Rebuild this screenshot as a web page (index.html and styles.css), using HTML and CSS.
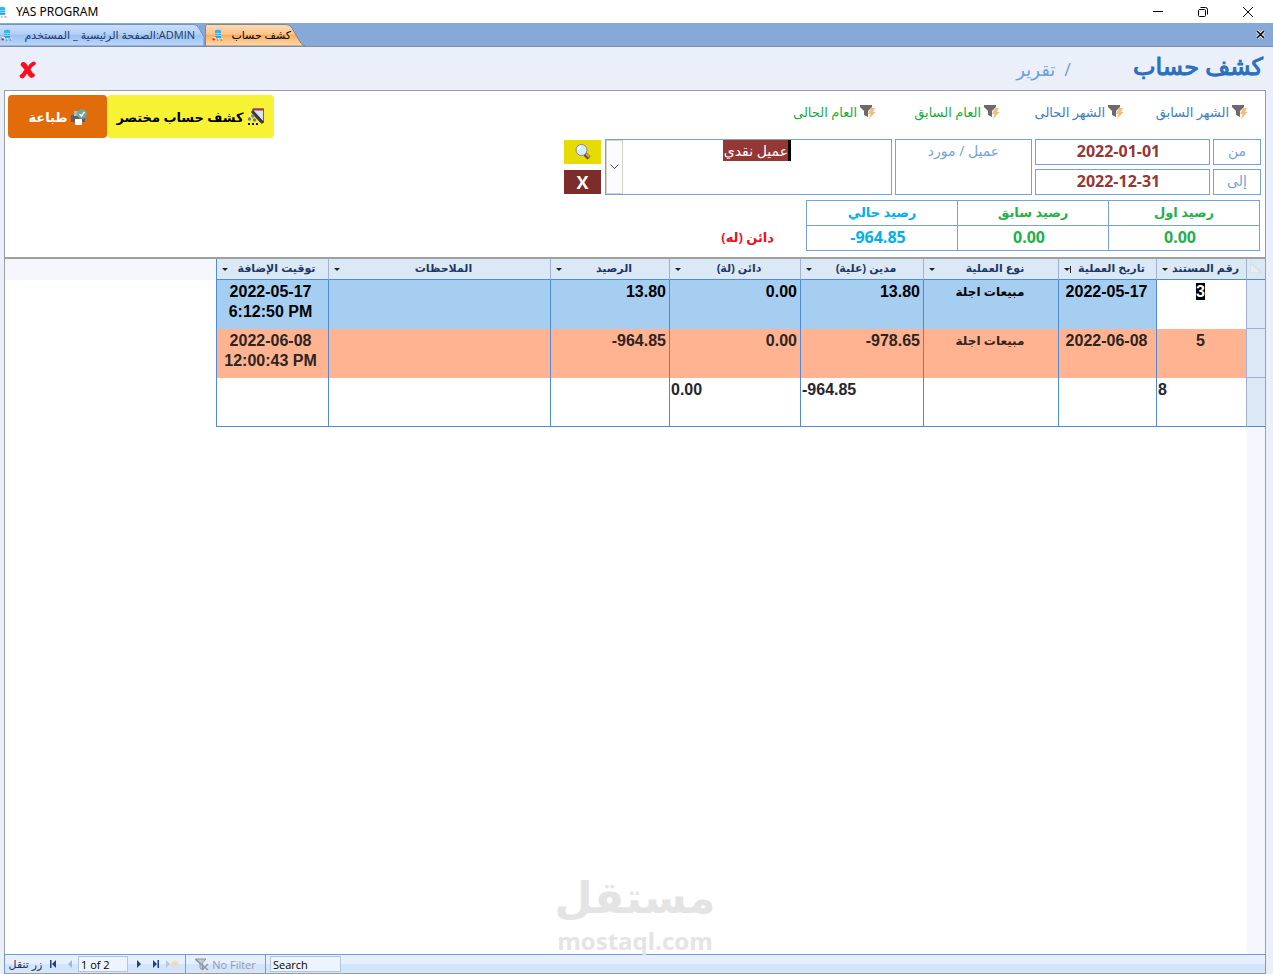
FILE: index.html
```html
<!DOCTYPE html>
<html lang="ar">
<head>
	<meta charset="UTF-8" />
	<title>YAS PROGRAM</title>
	<link rel="stylesheet" href="styles.css">
</head>
<body>
	<!-- shared icons -->
	<svg class="defs" width="0" height="0" aria-hidden="true">
		<symbol id="db" viewBox="0 0 12 12">
			<path d="M3 2.2h6v6.6H3z" fill="#12a5ee"/>
			<ellipse cx="6" cy="2" rx="3" ry="1.2" fill="#29b9f5"/>
			<path d="M3 4.3h6M3 6.3h6" stroke="#d8f2ff" stroke-width=".8"/>
			<path d="M1 9h3M6 10h1M10 10h1" stroke="#fff" stroke-width="1.5"/>
			<path d="M.6 10.3h2.2" stroke="#e2162a" stroke-width="2"/>
			<path d="M5 11h1.5M8.5 11h2" stroke="#777" stroke-width="1"/>
		</symbol>
		<symbol id="funnel" viewBox="0 0 16 18">
			<path d="M0 2h12v2L8 8v6l-4-2V8L0 4z" fill="#6d696d"/>
			<path d="M11 5h4l-2 4h2.500l-7 7.500 2-5.500H8z" fill="#f3bd7c"/>
		</symbol>
	</svg>
	<header class="titlebar">
		<svg class="appIcon" viewBox="0 0 12 12"><use href="#db"/></svg>
		<span class="appName">YAS PROGRAM</span>
		<div class="winButtons">
			<button type="button" aria-label="Minimize"><svg width="12" height="12" viewBox="0 0 12 12"><path d="M1 5.500h10" stroke="#000"/></svg></button>
			<button type="button" aria-label="Restore"><svg width="12" height="12" viewBox="0 0 12 12" fill="none" stroke="#000"><rect x="1.500" y="3.500" width="7" height="7" rx="1"/><path d="M3.500 1.500h5a2 2 0 0 1 2 2v5"/></svg></button>
			<button type="button" aria-label="Close"><svg width="12" height="12" viewBox="0 0 12 12"><path d="M1 1l10 10M11 1L1 11" stroke="#000"/></svg></button>
		</div>
	</header>
	<nav class="tabs">
		<a class="tab tabHome" href="#">
			<svg class="tabShape" viewBox="0 0 205 24" preserveAspectRatio="none">
				<defs><linearGradient id="blueTab" x1="0" y1="0" x2="0" y2="1"><stop offset="0" stop-color="#c9defa"/><stop offset=".45" stop-color="#b4d0f6"/><stop offset=".5" stop-color="#9dc1f0"/><stop offset="1" stop-color="#bbd8fc"/></linearGradient></defs>
				<path d="M-1 24V1.500H193q4 0 6 4l5 9V24z" fill="url(#blueTab)" stroke="#6f8fbf"/>
			</svg>
			<span class="tabText"><svg class="tabIcon" viewBox="0 0 12 12"><use href="#db"/></svg><bdo dir="ltr"><bdi dir="rtl">الصفحة الرئيسية _ المستخدم</bdi>:ADMIN</bdo></span>
		</a>
		<a class="tab tabActive" href="#">
			<svg class="tabShape" viewBox="0 0 100 24" preserveAspectRatio="none">
				<defs><linearGradient id="orangeTab" x1="0" y1="0" x2="0" y2="1"><stop offset="0" stop-color="#fbdcb8"/><stop offset=".45" stop-color="#fcc48c"/><stop offset=".5" stop-color="#fbad5e"/><stop offset="1" stop-color="#ffdcae"/></linearGradient></defs>
				<path d="M.5 24V3.500q0-2 2-2H81q4 0 6 4l8 14q2 4 5 4.500z" fill="url(#orangeTab)" stroke="#8d7f78"/>
			</svg>
			<span class="tabText"><svg class="tabIcon" viewBox="0 0 12 12"><use href="#db"/></svg><bdi>كشف حساب</bdi></span>
		</a>
		<button class="closeTab" type="button" aria-label="إغلاق"><svg width="9" height="9" viewBox="0 0 9 9"><path d="M1 1l7 7M8 1L1 8" stroke="#fff" stroke-width="3"/><path d="M1 1l7 7M8 1L1 8" stroke="#000" stroke-width="1.600"/></svg></button>
	</nav>
	<main class="form" dir="rtl">
		<div class="heading">
			<h1>كشف حساب</h1>
			<span class="kind">/&ensp;تقرير</span>
			<button class="closeForm" type="button" aria-label="خروج"><svg width="18" height="18" viewBox="0 0 18 18"><path d="M4 1q3 0 5 4.500Q11.500 1 15 .5q2.500.5 1.500 3-3.500 2-5 5 1.500 3.500 4.500 5 0 3-4 3.500-2.500-1.500-4-4.500-2 3.500-4 5-3.500 0-3.500-3Q4 12 5.500 8.500 3 6 1.500 4 2 1 4 1z" fill="#fa0d1f"/></svg></button>
		</div>
		<form class="panel" action="#">
			<div class="toolRow">
				<a class="filter month" href="#"><svg width="16" height="18"><use href="#funnel"/></svg>الشهر السابق</a>
				<a class="filter month" href="#"><svg width="16" height="18"><use href="#funnel"/></svg>الشهر الحالى</a>
				<a class="filter year" href="#"><svg width="16" height="18"><use href="#funnel"/></svg>العام السابق</a>
				<a class="filter year" href="#"><svg width="16" height="18"><use href="#funnel"/></svg>العام الحالى</a>
				<div class="actions">
					<button class="brief" type="button">
						<svg width="18" height="18" viewBox="0 0 18 18"><path d="M6 1h10.500v13H13L6 6z" fill="#dfe0f0" stroke="#6a6470"/><path d="M5.500 1.500H17" stroke="#a8325c" stroke-width="2"/><path d="M5 3l11 12" stroke="#3a363c" stroke-width="3"/><circle cx="6" cy="8" r="1.700" fill="#6d7f9e"/><circle cx="2.500" cy="11" r="1.700" fill="#6d7f9e"/><circle cx="7.500" cy="12" r="1.700" fill="#6d7f9e"/><path d="M1 16h2M5 16h2M9 16h2" stroke="#111" stroke-width="2"/></svg>
						كشف حساب مختصر
					</button>
					<button class="print" type="button">
						<svg width="16" height="18" viewBox="0 0 16 18"><path d="M0 7h14v7H0z" fill="#5c5f66"/><path d="M3 3h5v5H3z" fill="#a9b9c4"/><circle cx="11" cy="6" r="5" fill="#71a59b"/><path d="M8.500 6l2 2 3-4" fill="none" stroke="#fff" stroke-width="1.500"/><path d="M4 11h7v6H4z" fill="#fff"/></svg>
						طباعة
					</button>
				</div>
			</div>
			<div class="fields">
				<label class="cell caption" for="from">من</label>
				<input class="cell date" id="from" type="text" value="2022-01-01" />
				<label class="cell caption party" for="client">عميل / مورد</label>
				<div class="cell combo">
					<select id="client"><option>عميل نقدي</option></select>
					<span class="arrow"><svg width="9" height="6" viewBox="0 0 9 6"><path d="M.5.5l4 4 4-4" fill="none" stroke="#444"/></svg></span>
				</div>
				<button class="find" type="button" aria-label="بحث"><svg width="18" height="18" viewBox="0 0 18 18"><path d="M11 11l4 4" stroke="#5b4030" stroke-width="4"/><path d="M12 11l3 3" stroke="#d3a777" stroke-width="2"/><circle cx="7.500" cy="7" r="5.500" fill="#d9ecfb" stroke="#8087ad"/><path d="M4 7q0-3 3-3.500" stroke="#fff" stroke-width="2" fill="none"/></svg></button>
				<label class="cell caption" for="to">إلى</label>
				<input class="cell date" id="to" type="text" value="2022-12-31" />
				<button class="clear" type="button">X</button>
			</div>
			<div class="balanceRow">
				<table class="balance">
					<tr><th>رصيد اول</th><th>رصيد سابق</th><th class="current">رصيد حالي</th></tr>
					<tr><td>0.00</td><td>0.00</td><td class="current"><bdo dir="ltr">-964.85</bdo></td></tr>
				</table>
				<strong class="status">دائن (له)</strong>
			</div>
		</form>
		<section class="sheet">
			<table class="entries">
				<colgroup>
					<col class="cSel"><col class="cNum"><col class="cDate"><col class="cType"><col class="cDebit"><col class="cCredit"><col class="cBalance"><col class="cNotes"><col class="cTime">
				</colgroup>
				<thead>
					<tr>
						<th class="selector"><svg width="12" height="10" viewBox="0 0 12 10"><path d="M0 0v10h12z" fill="#e9edf2" stroke="#cfd6df"/></svg></th>
						<th><div class="head"><span>رقم المستند</span><button type="button" aria-label="تصفية"></button></div></th>
						<th><div class="head"><span>تاريخ العملية</span><button class="sorted" type="button" aria-label="تصفية"></button></div></th>
						<th><div class="head"><span>نوع العملية</span><button type="button" aria-label="تصفية"></button></div></th>
						<th><div class="head"><span>مدين (علية)</span><button type="button" aria-label="تصفية"></button></div></th>
						<th><div class="head"><span>دائن (لة)</span><button type="button" aria-label="تصفية"></button></div></th>
						<th><div class="head"><span>الرصيد</span><button type="button" aria-label="تصفية"></button></div></th>
						<th><div class="head"><span>الملاحظات</span><button type="button" aria-label="تصفية"></button></div></th>
						<th><div class="head"><span>توقيت الإضافة</span><button type="button" aria-label="تصفية"></button></div></th>
					</tr>
				</thead>
				<tbody>
					<tr class="rowBlue">
						<td class="selector"></td>
						<td class="editing"><mark>3</mark></td>
						<td>2022-05-17</td>
						<td class="type">مبيعات اجلة</td>
						<td class="num">13.80</td>
						<td class="num">0.00</td>
						<td class="num">13.80</td>
						<td></td>
						<td class="time">2022-05-17<br>6:12:50 PM</td>
					</tr>
					<tr class="rowOrange">
						<td class="selector"></td>
						<td>5</td>
						<td>2022-06-08</td>
						<td class="type">مبيعات اجلة</td>
						<td class="num">-978.65</td>
						<td class="num">0.00</td>
						<td class="num">-964.85</td>
						<td></td>
						<td class="time">2022-06-08<br>12:00:43 PM</td>
					</tr>
				</tbody>
				<tfoot>
					<tr>
						<td class="selector"></td>
						<td>8</td>
						<td></td>
						<td></td>
						<td>-964.85</td>
						<td>0.00</td>
						<td></td>
						<td></td>
						<td></td>
					</tr>
				</tfoot>
			</table>
			<div class="blank"></div>
			<div class="watermark"><span class="brand">مستقل</span><span class="site">mostaql.com</span></div>
		</section>
		<footer class="navigator" dir="ltr">
			<span class="navLabel">زر تنقل</span>
			<button type="button" aria-label="الأول"><svg width="8" height="8" viewBox="0 0 8 8"><path d="M1 0h1.500v8H1zM7 0v8L3 4z" fill="#1d3f91"/></svg></button>
			<button type="button" aria-label="السابق"><svg width="8" height="8" viewBox="0 0 8 8"><path d="M6 0v8L2 4z" fill="#a5b5d1"/></svg></button>
			<input class="record" type="text" value="1 of 2" aria-label="السجل" />
			<button class="next" type="button" aria-label="التالي"><svg width="8" height="8" viewBox="0 0 8 8"><path d="M2 0v8l4-4z" fill="#1d3f91"/></svg></button>
			<button type="button" aria-label="الأخير"><svg width="8" height="8" viewBox="0 0 8 8"><path d="M1 0v8l4-4zM5.500 0H7v8H5.500z" fill="#1d3f91"/></svg></button>
			<button class="new" type="button" aria-label="جديد"><svg width="13" height="8" viewBox="0 0 13 8"><path d="M0 0v8l4-4z" fill="#b9c5dc"/><path d="M5 4h8M9 0v8M6 1l6 6M12 1L6 7" stroke="#f0d8bd" stroke-width="1.300"/></svg></button>
			<button class="noFilter" type="button" disabled><svg width="14" height="13" viewBox="0 0 14 13"><path d="M1 1h10L7.500 5v7L5 10V5z" fill="#c4cad3" stroke="#8d96a3"/><path d="M0 1l13 11M13 6l-6 6" stroke="#8d96a3" stroke-width="1.500"/></svg>No Filter</button>
			<input class="search" type="text" value="Search" aria-label="بحث" />
		</footer>
	</main>
</body>
</html>
```
FILE: styles.css
```css
*{
	margin: 0;padding: 0;
	box-sizing: border-box;
}
body{
	display: flex;
	flex-direction: column;
	height: 100vh;
	overflow: hidden;
	background: #ebeffa;
	font-family: "Open Sans","DejaVu Sans",sans-serif;
	font-size: 14px;
}
button,input,select{
	font: inherit;
	border: 0;
	background: none;
}
a{
	text-decoration: none;
}
svg{
	flex: none;
}
.defs{
	position: absolute;
}

/* window title */
.titlebar{
	display: flex;
	align-items: center;
	height: 23px;
	background: #fff;
}
.appIcon{
	width: 12px;height: 12px;
	margin-left: -4px;
}
.appName{
	margin-left: 8px;
	font: 12px "Noto Sans",sans-serif;
}
.winButtons{
	display: flex;
	margin-left: auto;
	padding-right: 3px;
}
.winButtons button{
	display: flex;
	align-items: center;
	justify-content: center;
	width: 45px;height: 22px;
}

/* document tabs */
.tabs{
	display: flex;
	height: 24px;
	background: #87a9d8;
	border-bottom: 1px solid #7c8ca6;
}
.tab{
	display: grid;
	height: 23px;
	color: #1c3a70;
	font-size: 11px;
}
.tabHome{
	width: 205px;
}
.tabActive{
	width: 100px;
	color: #000;
}
.tabShape,.tabText{
	grid-area: 1 / 1;
	width: 100%;height: 23px;
}
.tabText{
	display: flex;
	align-items: center;
	justify-content: space-between;
	padding: 0 10px 0 1px;
}
.tabActive .tabText{
	padding: 0 14px 0 7px;
}
.tabIcon{
	width: 12px;height: 12px;
}
.closeTab{
	display: flex;
	align-items: center;
	margin-left: auto;
	padding-right: 8px;
}

/* form */
.form{
	display: flex;
	flex-direction: column;
	flex: 1;
	min-height: 0;
	padding: 0 7px 0 4px;
}
.heading{
	display: flex;
	align-items: center;
	height: 43px;
	padding: 0 3px 0 15px;
}
.heading h1{
	font-size: 24px;
	font-weight: normal;
	line-height: 30px;
	padding-bottom: 6px;
	color: #2a6fc0;
	-webkit-text-stroke: 1px #2a6fc0;
}
.kind{
	margin-right: 62px;
	font-size: 18px;
	color: #6f9fdc;
}
.closeForm{
	display: flex;
	margin-right: auto;
	padding-top: 3px;
}
.panel{
	height: 167px;
	padding: 4px 4px 0 3px;
	border: solid #9c9c9c;
	border-width: 1px 1px 0 1px;
	background: #fff;
}
.toolRow{
	display: flex;
	height: 44px;
}
.filter{
	display: flex;
	align-items: center;
	gap: 3px;
	width: 124px;
	height: 34px;
	font-size: 13px;
	white-space: nowrap;
}
.filter:first-child{
	margin-right: 13px;
}
.month{
	color: #3d7cc6;
}
.year{
	color: #17ab42;
}
.actions{
	display: flex;
	margin-right: auto;
}
.actions button{
	display: flex;
	align-items: center;
	justify-content: center;
	gap: 3px;
	height: 43px;
	border-radius: 4px;
	font-size: 13px;
	font-weight: bold;
	white-space: nowrap;
}
.brief{
	width: 167px;
	background: #f8f234;
}
.print{
	width: 99px;
	background: #e26b0a;
	color: #fff;
}
.fields{
	display: grid;
	grid-template-columns: 48px 175px 137px 287px 38px;
	grid-template-rows: 26px 26px;
	gap: 4px 3px;
}
.cell{
	width: 100%;
	border: 1px solid #75a2da;
	text-align: center;
}
.caption{
	line-height: 22px;
	color: #75a2da;
}
.date{
	direction: ltr;
	padding: 0 8px 2px 0;
	font-size: 16px;
	font-weight: bold;
	color: #953735;
}
.party,.combo{
	grid-row: span 2;
}
.combo{
	display: flex;
}
.combo select{
	appearance: none;
	height: 21px;
	margin: 0 auto;
	border-right: 3px solid #000;
	background: #953735;
	color: #fff;
}
.arrow{
	display: flex;
	align-items: center;
	justify-content: center;
	width: 17px;
	border: 1px solid #d5d2c8;
	background: #fcfcfc;
}
.find,.clear{
	display: flex;
	align-items: center;
	justify-content: center;
	width: 37px;height: 24px;
	align-self: center;
	justify-self: end;
}
.find{
	background: #e6dc04;
}
.clear{
	background: #7b2c2b;
	color: #fff;
	font-size: 18px;
	font-weight: bold;
}
.balanceRow{
	display: flex;
	align-items: flex-end;
	margin-top: 5px;
}
.balance{
	width: 454px;
	margin-right: 1px;
	table-layout: fixed;
	border-collapse: collapse;
	color: #22b14c;
}
.balance th,.balance td{
	height: 25px;
	border: 1px solid #75a2da;
	text-align: center;
	line-height: 22px;
}
.balance th{
	padding-bottom: 2px;
	font-size: 13px;
}
.balance td{
	padding: 0 8px 2px 0;
	font-size: 16px;
	font-weight: bold;
}
.balance .current{
	color: #00b0f0;
}
.status{
	margin-right: 32px;
	font-size: 13px;
	line-height: 28px;
	color: #f40d1b;
}

/* datasheet */
.sheet{
	display: flex;
	flex: 1;
	flex-direction: column;
	position: relative;
	min-height: 0;
	border: solid #a0a09c;
	border-width: 2px 1px 0 1px;
	background: linear-gradient(#f6f7fe,#f6f7fe) 0 0 / 100% 21px no-repeat,#fff;
}
.entries{
	width: 1049px;
	table-layout: fixed;
	border-collapse: separate;
	border-spacing: 0;
	font-family: "Liberation Sans","DejaVu Sans",sans-serif;
	font-size: 16px;
	font-weight: bold;
	line-height: 20px;
}
.cSel{width: 19px;}
.cNum{width: 90px;}
.cDate{width: 98px;}
.cType{width: 135px;}
.cDebit{width: 123px;}
.cCredit{width: 131px;}
.cBalance{width: 119px;}
.cNotes{width: 222px;}
.cTime{width: 112px;}
.entries th{
	height: 21px;
	border-left: 1px solid #a3b0d0;
	border-bottom: 1px solid #4f8bd6;
	background: #dbe8f5;
	color: #1f3864;
	font-size: 11px;
}
.entries th:last-child,.entries td:last-child{
	border-left: 1px solid #4f8bd6;
}
.head{
	display: flex;
	align-items: center;
	height: 20px;
	padding: 0 4px;
}
.head span{
	flex: 1;
	padding-bottom: 2px;
	white-space: nowrap;
}
.head button{
	display: flex;
	justify-content: center;
	width: 8px;
}
.head button::before{
	content: "";
	border: 3px solid transparent;
	border-top-color: #222;
	border-bottom: 0;
}
.head .sorted{
	align-items: center;
}
.head .sorted::after{
	content: "";
	order: -1;
	width: 1px;height: 7px;
	background: #222;
}
.entries td{
	direction: ltr;
	height: 49px;
	border-left: 1px solid #4f8bd6;
	text-align: center;
	vertical-align: top;
	padding: 2px 2px 0 2px;
}
.entries .type{
	font-size: 12px;
}
.entries .num{
	text-align: right;
}
.entries .time{
	padding-right: 4px;
}
.rowBlue{
	background: #a5cef0;
}
.rowOrange{
	background: #ffb391;
	color: #2e2420;
}
.rowBlue .editing{
	background: #fff;
}
mark{
	background: #000;
	color: #fff;
}
.entries tfoot td{
	border-bottom: 1px solid #4f8bd6;
	background: #fff;
	color: #26262e;
	text-align: left;
}
.entries .selector{
	border-left-color: #a3b0d0;
	background: #dbe8f5;
}
.entries tbody .selector{
	border-bottom: 1px solid #a3b0d0;
}
.blank{
	flex: 1;
	width: 18px;
	background: #f6f7fe;
}
/* sits over the empty part of the sheet */
.watermark{
	display: flex;
	flex-direction: column;
	align-items: center;
	position: absolute;
	left: 50%;bottom: -4px;
	z-index: 1;
	transform: translateX(-50%);
	color: #e4e4e4;
	font-weight: bold;
}
.brand{
	font: bold 44px/52px "DejaVu Sans",sans-serif;
}
.site{
	font-size: 24px;
	line-height: 34px;
}

/* record navigator */
.navigator{
	display: flex;
	align-items: center;
	height: 20px;
	border: solid #6f9bd8;
	border-width: 1px 1px 0 1px;
	border-bottom: 1px solid #9c9c9c;
	background: linear-gradient(#e6f0fe 50%,#d3e5fd 50%);
	color: #15315f;
	font-size: 11px;
}
.navigator button{
	display: flex;
	align-items: center;
	justify-content: center;
	width: 17px;height: 18px;
}
.navLabel{
	width: 39px;
	padding-left: 2px;
	text-align: center;
	line-height: 16px;
	white-space: nowrap;
}
.record,.search{
	height: 16px;
	border: 1px solid #b0c5e4;
	background: #edf4fe;
	padding: 0 2px;
	color: #000;
}
.record{
	width: 50px;
}
.navigator .next{
	margin-left: 2px;
}
.navigator .noFilter{
	gap: 3px;
	width: 81px;
	margin-left: 4px;
	border: solid #6f9bd8;
	border-width: 0 1px;
	color: #929cab;
}
.search{
	width: 71px;
	margin-left: 4px;
}
```
